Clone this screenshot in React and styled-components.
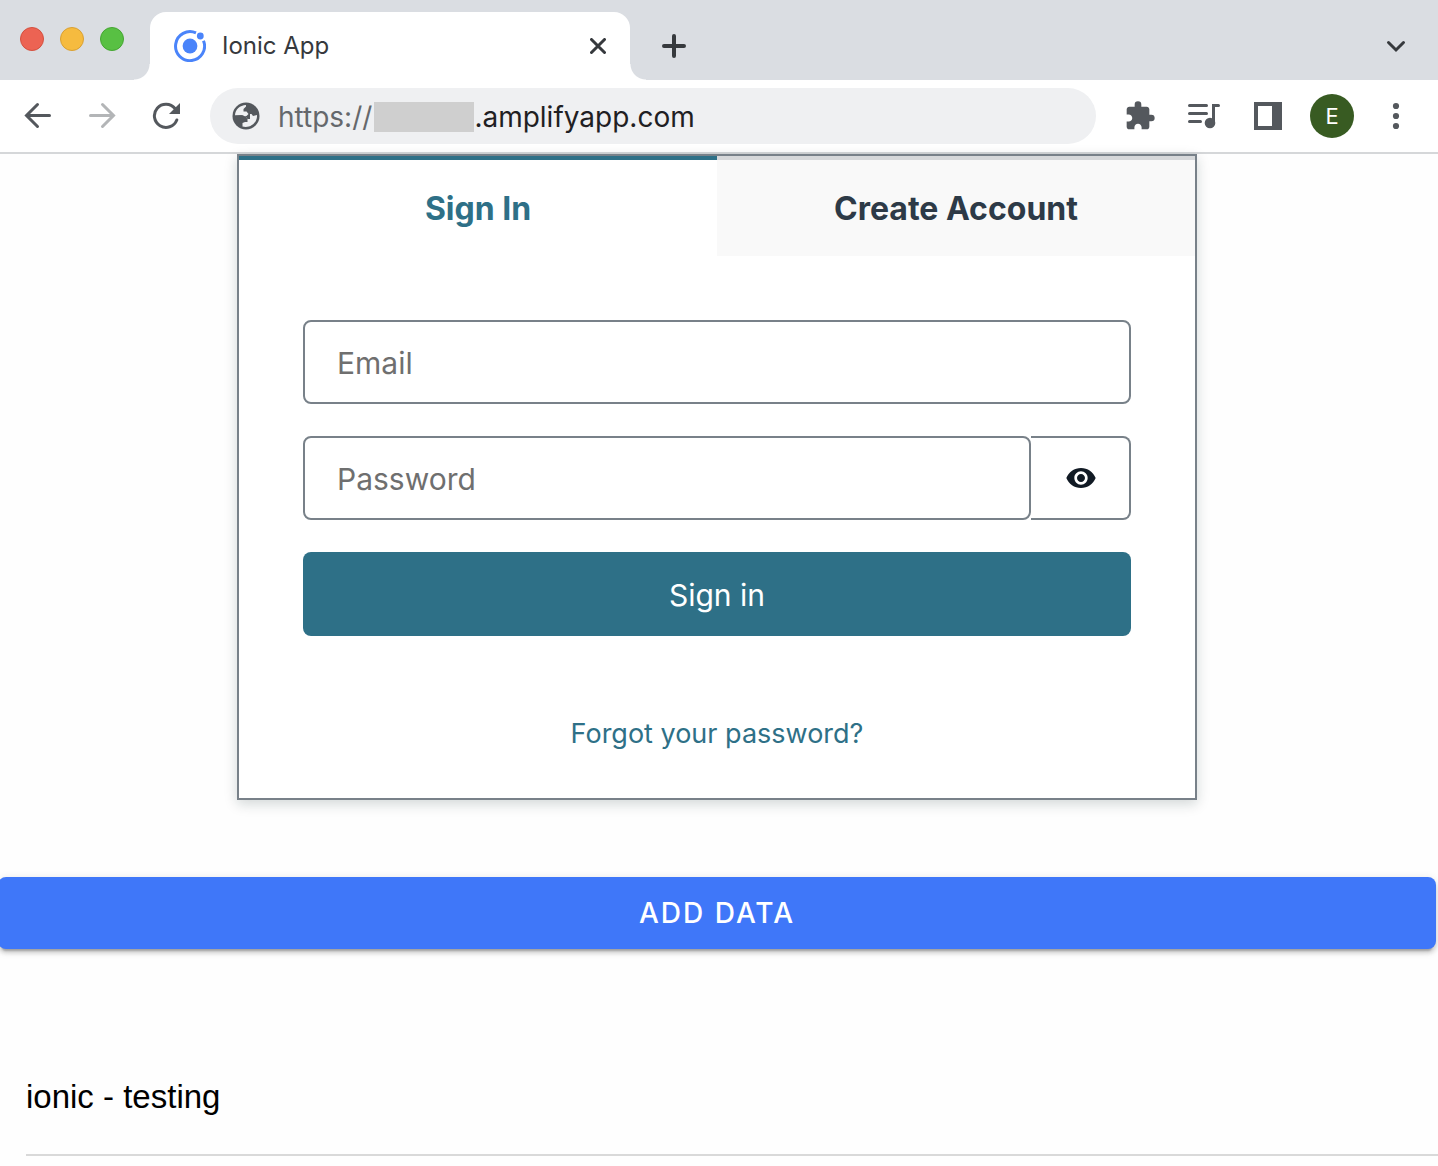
import React from "react";
import styled, { createGlobalStyle } from "styled-components";
import { MdExtension, MdVisibility } from "react-icons/md";

const GlobalStyle = createGlobalStyle`
  * { box-sizing: border-box; }
  body {
    margin: 0;
    background: #fefefe;
    overflow-x: hidden;
    font-family: Inter, "Liberation Sans", sans-serif;
  }
  button, input { font: inherit; color: inherit; }
`;

const TabStrip = styled.header`
  display: flex;
  align-items: flex-end;
  height: 80px;
  background: #dadde2;
  padding: 0 14px 0 20px;
`;

const WindowControls = styled.div`
  display: flex;
  gap: 16px;
  align-self: flex-start;
  margin: 27px 10px 0 0;
`;

const Light = styled.button`
  width: 24px;
  height: 24px;
  padding: 0;
  border: 1px solid ${(p) => p.$edge};
  border-radius: 50%;
  background: ${(p) => p.$color};
`;

const Flare = styled.span`
  width: 16px;
  height: 16px;
  background: radial-gradient(circle at ${(p) => p.$side} 0, transparent 15px, #fff 16px);
`;

const Tab = styled.div`
  display: flex;
  align-items: center;
  width: 480px;
  height: 68px;
  padding: 0 16px 0 24px;
  border-radius: 16px 16px 0 0;
  background: #fff;
`;

const TabTitle = styled.span`
  flex: 1;
  margin-left: 16px;
  font-size: 24px;
  line-height: 32px;
  color: #36393d;
`;

const IconButton = styled.button`
  display: flex;
  flex: none;
  align-items: center;
  justify-content: center;
  width: ${(p) => (p.$small ? "32px" : "56px")};
  height: ${(p) => (p.$small ? "32px" : "56px")};
  padding: 0;
  border: 0;
  border-radius: 50%;
  background: transparent;
  color: ${(p) => p.$color || "#54585d"};
`;

const NewTab = styled.div`
  align-self: flex-start;
  margin-top: 18px;
`;

const TabSearch = styled(NewTab)`
  margin-left: auto;
`;

const Toolbar = styled.nav`
  display: flex;
  align-items: center;
  gap: 8px;
  padding: 8px 14px 8px 10px;
  border-bottom: 2px solid #d5d7d9;
  background: #fff;
`;

const AddressBar = styled.label`
  display: flex;
  flex: 1;
  align-items: center;
  min-width: 0;
  height: 56px;
  margin: 0 8px;
  padding: 0 22px;
  border-radius: 28px;
  background: #eff0f2;
  font-size: 28px;
  line-height: 36px;
`;

const Address = styled.span`
  display: flex;
  flex: 1;
  align-items: center;
  min-width: 0;
  padding: 2px 0 0 18px;
`;

const Scheme = styled.span`
  color: #65686c;
`;

const Redaction = styled.span`
  flex: none;
  width: 100px;
  height: 30px;
  margin-left: 2px;
  background: #cfcfcf;
`;

const AddressInput = styled.input`
  flex: 1;
  min-width: 0;
  padding: 0;
  border: 0;
  outline: 0;
  background: transparent;
  color: #1f2023;
`;

const Avatar = styled.span`
  display: grid;
  place-items: center;
  width: 44px;
  height: 44px;
  border-radius: 50%;
  background: #385b22;
  color: #fff;
  font-size: 22px;
  line-height: 32px;
`;

const Page = styled.main`
  margin: 0 2px 0 -2px;
`;

const Card = styled.section`
  max-width: 960px;
  margin: 0 auto;
  border: 2px solid #788189;
  background: #fff;
  box-shadow: 0 4px 12px rgba(13, 38, 38, 0.18);
`;

const AuthTabs = styled.div`
  display: grid;
  grid-template-columns: 1fr 1fr;
`;

const AuthTab = styled.button`
  height: 100px;
  padding: 2px 0 0;
  border: 0;
  border-top: 4px solid ${(p) => (p.$active ? "#2e7087" : "#d6d8da")};
  background: ${(p) => (p.$active ? "#fff" : "#f9f9f9")};
  color: ${(p) => (p.$active ? "#2e7087" : "#2d3a47")};
  font-size: 32px;
  font-weight: 700;
  line-height: 48px;
`;

const Form = styled.form`
  display: flex;
  flex-direction: column;
  gap: 32px;
  padding: 64px;
`;

const Field = styled.input`
  flex: 1;
  width: 100%;
  min-width: 0;
  min-height: 84px;
  padding: 2px 32px 0;
  border: 2px solid #788189;
  border-radius: 8px;
  outline: 0;
  background: #fff;
  font-size: 30px;
  line-height: 48px;
  &::placeholder { color: #6f6f6f; opacity: 1; }
`;

const PasswordRow = styled.div`
  display: flex;
`;

const RevealButton = styled.button`
  display: grid;
  place-items: center;
  width: 100px;
  padding: 0 0 0 2px;
  border: 2px solid #788189;
  border-left: 0;
  border-radius: 0 8px 8px 0;
  background: #fff;
  color: #111a24;
`;

const SubmitButton = styled.button`
  height: 84px;
  padding: 2px 0 0;
  border: 0;
  border-radius: 8px;
  background: #2e7087;
  color: #fff;
  font-size: 30px;
  line-height: 48px;
`;

const CardFooter = styled.div`
  display: flex;
  justify-content: center;
  padding-bottom: 32px;
`;

const LinkButton = styled.button`
  height: 66px;
  padding: 2px 32px 0;
  border: 0;
  background: transparent;
  color: #2e7087;
  font-size: 27px;
  line-height: 42px;
`;

const AddButton = styled.button`
  display: block;
  width: 100%;
  height: 72px;
  margin-top: 77px;
  padding: 0;
  border: 0;
  border-radius: 8px;
  background: #3f77f9;
  box-shadow: 0 6px 2px -4px rgba(0, 0, 0, 0.2), 0 4px 4px rgba(0, 0, 0, 0.14), 0 2px 10px rgba(0, 0, 0, 0.12);
  color: #fff;
  font-size: 28px;
  font-weight: 500;
  letter-spacing: 2px;
  text-transform: uppercase;
`;

const List = styled.ul`
  margin: 91px -2px 0 28px;
  padding: 0;
  list-style: none;
`;

const Item = styled.li`
  padding: 34px 0;
  border-bottom: 2px solid #d9d9d9;
  color: #000;
  font-family: "Liberation Sans", Arial, sans-serif;
  font-size: 33px;
  line-height: 46px;
`;

const Stroke = ({ size, width = 3, cap = "round", children }) => (
  <svg width={size} height={size} viewBox={`0 0 ${size} ${size}`} fill="none" stroke="currentColor"
    strokeWidth={width} strokeLinecap={cap} strokeLinejoin="miter" aria-hidden="true">
    {children}
  </svg>
);

const IonicLogo = () => (
  <svg width="32" height="32" viewBox="0 0 32 32" fill="#4a84fa" aria-hidden="true">
    <circle cx="16" cy="16" r="7.4" />
    <circle cx="26.3" cy="6" r="3.4" />
    <path d="M22 2.9A14.5 14.5 0 1 0 29.5 10.7" fill="none" stroke="#4a84fa" strokeWidth="3" />
  </svg>
);

const Globe = () => (
  <svg width="28" height="28" viewBox="0 0 28 28" aria-hidden="true">
    <circle cx="14" cy="14" r="13.5" fill="#54585d" />
    <path
      d="M3 13.2C3.200 7.500 8 3.200 14 3V4.500L11.500 7V9.500H14.500L16.500 12H19.500L21 14L25 13C25.600 20.500 18.500 26.500 10.500 24.500V21L13 20H15.500V17L13.500 14.500L10 13.200Z"
      fill="#eff0f2"
    />
    <path d="M3 13.200H10L13.500 14.500L15.500 17H18V12H16.500L14.500 14H8Z" fill="#54585d" />
  </svg>
);

export default function App() {
  return (
    <>
      <GlobalStyle />
      <TabStrip>
        <WindowControls>
          <Light aria-label="Close window" $color="#ec6353" $edge="#d4503f" />
          <Light aria-label="Minimise window" $color="#f6bb3f" $edge="#d9a033" />
          <Light aria-label="Zoom window" $color="#58c043" $edge="#45a632" />
        </WindowControls>
        <Flare $side="0" />
        <Tab>
          <IonicLogo />
          <TabTitle>Ionic App</TabTitle>
          <IconButton $small $color="#36393d" aria-label="Close tab">
            <Stroke size={16}><path d="M1.500 1.500L14.500 14.500M14.500 1.500L1.500 14.500" /></Stroke>
          </IconButton>
        </Tab>
        <Flare $side="100%" />
        <NewTab>
          <IconButton $color="#36393d" aria-label="New tab">
            <Stroke size={24} width={4}><path d="M12 2V22M2 12H22" /></Stroke>
          </IconButton>
        </NewTab>
        <TabSearch>
          <IconButton $color="#36393d" aria-label="Search tabs">
            <Stroke size={20}><path d="M2.500 6.500L10 14L17.500 6.500" /></Stroke>
          </IconButton>
        </TabSearch>
      </TabStrip>

      <Toolbar aria-label="Browser toolbar">
        <IconButton aria-label="Back">
          <Stroke size={28}><path d="M25.500 13.500H3M13.500 2.500L2.500 13.500L13.500 24.500" /></Stroke>
        </IconButton>
        <IconButton aria-label="Forward" $color="#b3b5b7">
          <Stroke size={28}><path d="M2.500 13.500H25M14.500 2.500L25.500 13.500L14.500 24.500" /></Stroke>
        </IconButton>
        <IconButton aria-label="Reload">
          <Stroke size={28}>
            <path d="M23 6.500A11.600 11.600 0 1 0 24.800 18" />
            <path d="M28 1V12H17Z" fill="currentColor" stroke="none" />
          </Stroke>
        </IconButton>
        <AddressBar>
          <Globe />
          <Address>
            <Scheme>https://</Scheme>
            <Redaction />
            <AddressInput aria-label="Address" defaultValue=".amplifyapp.com" />
          </Address>
        </AddressBar>
        <IconButton aria-label="Extensions"><MdExtension size={32} /></IconButton>
        <IconButton aria-label="Media controls">
          <Stroke size={32}>
            <path d="M1.500 5.500H18.500M1.500 13.500H18.500M1.500 21.500H12.500" />
            <path d="M30.500 5.500H25.500V23" />
            <circle cx="22" cy="23" r="5.3" fill="currentColor" stroke="none" />
          </Stroke>
        </IconButton>
        <IconButton aria-label="Side panel">
          <Stroke size={28} width={4} cap="butt">
            <path d="M2 2H26V26H2Z" />
            <path d="M18 2H26V26H18Z" fill="currentColor" stroke="none" />
          </Stroke>
        </IconButton>
        <IconButton aria-label="Profile"><Avatar>E</Avatar></IconButton>
        <IconButton aria-label="Menu">
          <svg width="28" height="28" viewBox="0 0 28 28" fill="currentColor" aria-hidden="true">
            <circle cx="14" cy="4" r="3.100" />
            <circle cx="14" cy="14" r="3.100" />
            <circle cx="14" cy="24" r="3.100" />
          </svg>
        </IconButton>
      </Toolbar>

      <Page>
        <Card>
          <AuthTabs role="tablist">
            <AuthTab role="tab" aria-selected="true" $active>Sign In</AuthTab>
            <AuthTab role="tab" aria-selected="false">Create Account</AuthTab>
          </AuthTabs>
          <Form onSubmit={(e) => e.preventDefault()}>
            <Field type="email" placeholder="Email" aria-label="Email" />
            <PasswordRow>
              <Field type="password" placeholder="Password" aria-label="Password" />
              <RevealButton type="button" aria-label="Show password"><MdVisibility size={32} /></RevealButton>
            </PasswordRow>
            <SubmitButton type="submit">Sign in</SubmitButton>
          </Form>
          <CardFooter>
            <LinkButton type="button">Forgot your password?</LinkButton>
          </CardFooter>
        </Card>
        <AddButton type="button">Add data</AddButton>
        <List>
          <Item>ionic - testing</Item>
        </List>
      </Page>
    </>
  );
}
